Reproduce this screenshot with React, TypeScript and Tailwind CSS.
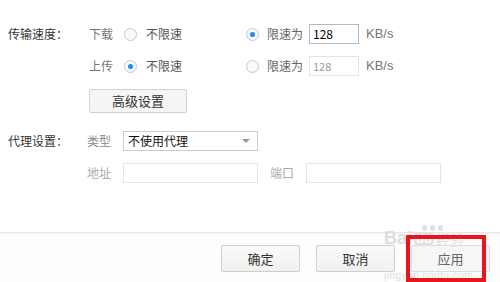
import React from "react"

function Radio({ checked }: { checked?: boolean }) {
  return (
    <span className="w-[13px] h-[13px] rounded-full border border-[#c3c9d1] bg-[#f7f9fb] flex items-center justify-center shrink-0">
      {checked && <span className="w-[5px] h-[5px] rounded-full bg-[#1a8cf0]" />}
    </span>
  )
}

function SpeedRow({ dir, limited }: { dir: string; limited: boolean }) {
  return (
    <div className="flex items-center h-[20px]">
      <span className="w-[81px] text-[#333]">{dir === "下载" ? "传输速度：" : ""}</span>
      <span className="w-[35px] text-[#777]">{dir}</span>
      <Radio checked={!limited} />
      <span className="ml-[9px] w-[100px] text-[#555]">不限速</span>
      <Radio checked={limited} />
      <span className="ml-[8px] w-[42px] text-[#666]">限速为</span>
      <span
        className={
          limited
            ? "w-[50px] h-[20px] border border-[#aabbd4] bg-white px-[3px] leading-[18px] text-[#000]"
            : "w-[50px] h-[20px] border border-[#e1e5ea] bg-white px-[3px] leading-[18px] text-[#999] text-[11px]"
        }
      >
        128
      </span>
      <span className="ml-[7px] text-[#777] text-[13px] font-['Liberation_Sans',sans-serif]">KB/s</span>
    </div>
  )
}

function Btn({ label, faded }: { label: string; faded?: boolean }) {
  return (
    <div
      className={
        faded
          ? "w-[79px] h-[27px] rounded-[2px] border border-[#dcdcdc] bg-[#f6f6f6] flex items-center justify-center text-[#666] text-[13px] leading-[14px]"
          : "w-[79px] h-[27px] rounded-[2px] border border-[#cfcfcf] bg-gradient-to-b from-[#fafafa] to-[#f0f0f0] flex items-center justify-center text-[#333] text-[13px] leading-[14px]"
      }
    >
      {label}
    </div>
  )
}

export default function App() {
  return (
    <div className="w-[500px] h-[282px] bg-white relative overflow-hidden text-[12px] font-['Noto_Sans_CJK_SC','Microsoft_YaHei',sans-serif]">
      {/* settings */}
      <div className="h-[232px] pl-[8px] pt-[24px] flex flex-col">
        <SpeedRow dir="下载" limited={true} />
        <div className="h-[12px]" />
        <SpeedRow dir="上传" limited={false} />

        <div className="ml-[81px] mt-[13px] w-[98px] h-[24px] rounded-[2px] border border-[#d2d2d2] bg-[#f5f5f5] flex items-center justify-center text-[#333] text-[13px]">
          高级设置
        </div>

        <div className="flex items-center h-[20px] mt-[18px]">
          <span className="w-[79px] text-[#333]">代理设置：</span>
          <span className="w-[36px] text-[#888]">类型</span>
          <div className="w-[135px] h-[20px] border border-[#cccccc] bg-white flex items-center justify-between pl-[4px] pr-[7px] text-[#111]">
            <span>不使用代理</span>
            <span className="w-0 h-0 border-l-[4px] border-r-[4px] border-t-[4px] border-l-transparent border-r-transparent border-t-[#999]" />
          </div>
        </div>

        <div className="flex items-center h-[20px] mt-[12px]">
          <span className="w-[79px]" />
          <span className="w-[36px] text-[#aaa]">地址</span>
          <div className="w-[135px] h-[20px] border border-[#e1e5ea] bg-white" />
          <span className="ml-[12px] w-[36px] text-[#aaa]">端口</span>
          <div className="w-[135px] h-[20px] border border-[#e1e5ea] bg-white" />
        </div>
      </div>

      {/* footer */}
      <div className="h-[50px] border-t border-[#e6e6e6] bg-[#fdfdfd] shadow-[inset_0_1px_2px_rgba(0,0,0,0.04)] flex justify-end gap-[16px] pr-[10px] pt-[12px]">
        <Btn label="确定" />
        <Btn label="取消" />
        <Btn label="应用" faded />
      </div>

      {/* watermark */}
      <div className="absolute left-[384px] top-[225px] flex flex-col items-start pointer-events-none">
        <div className="flex gap-[3px] ml-[38px] h-[6px]">
          <span className="w-[5px] h-[6px] rounded-full bg-[#e2e2e2]" />
          <span className="w-[5px] h-[6px] rounded-full bg-[#e2e2e2]" />
          <span className="w-[5px] h-[6px] rounded-full bg-[#e2e2e2]" />
        </div>
        <div className="flex items-center h-[15px] text-[#dedede] font-bold text-[18px] leading-[15px] font-['Liberation_Sans',sans-serif]">
          <span>Bai</span>
          <span className="ml-[2px] px-[2px] rounded-[5px] bg-[#e2e2e2] text-white text-[13px] leading-[14px]">du</span>
          <span className="ml-[2px] text-[14px] leading-[14px] font-normal font-['Noto_Sans_CJK_SC',sans-serif]">经验</span>
        </div>
        <span className="mt-[25px] text-[#e0e0e0] text-[10px] leading-[10px] font-['Liberation_Sans',sans-serif] tracking-[0.5px]">jingyan.baidu.com</span>
      </div>

      {/* red highlight */}
      <div className="absolute left-[406px] top-[235px] w-[80px] h-[47px] border-[4px] border-[#e8141e] pointer-events-none" />
    </div>
  )
}
